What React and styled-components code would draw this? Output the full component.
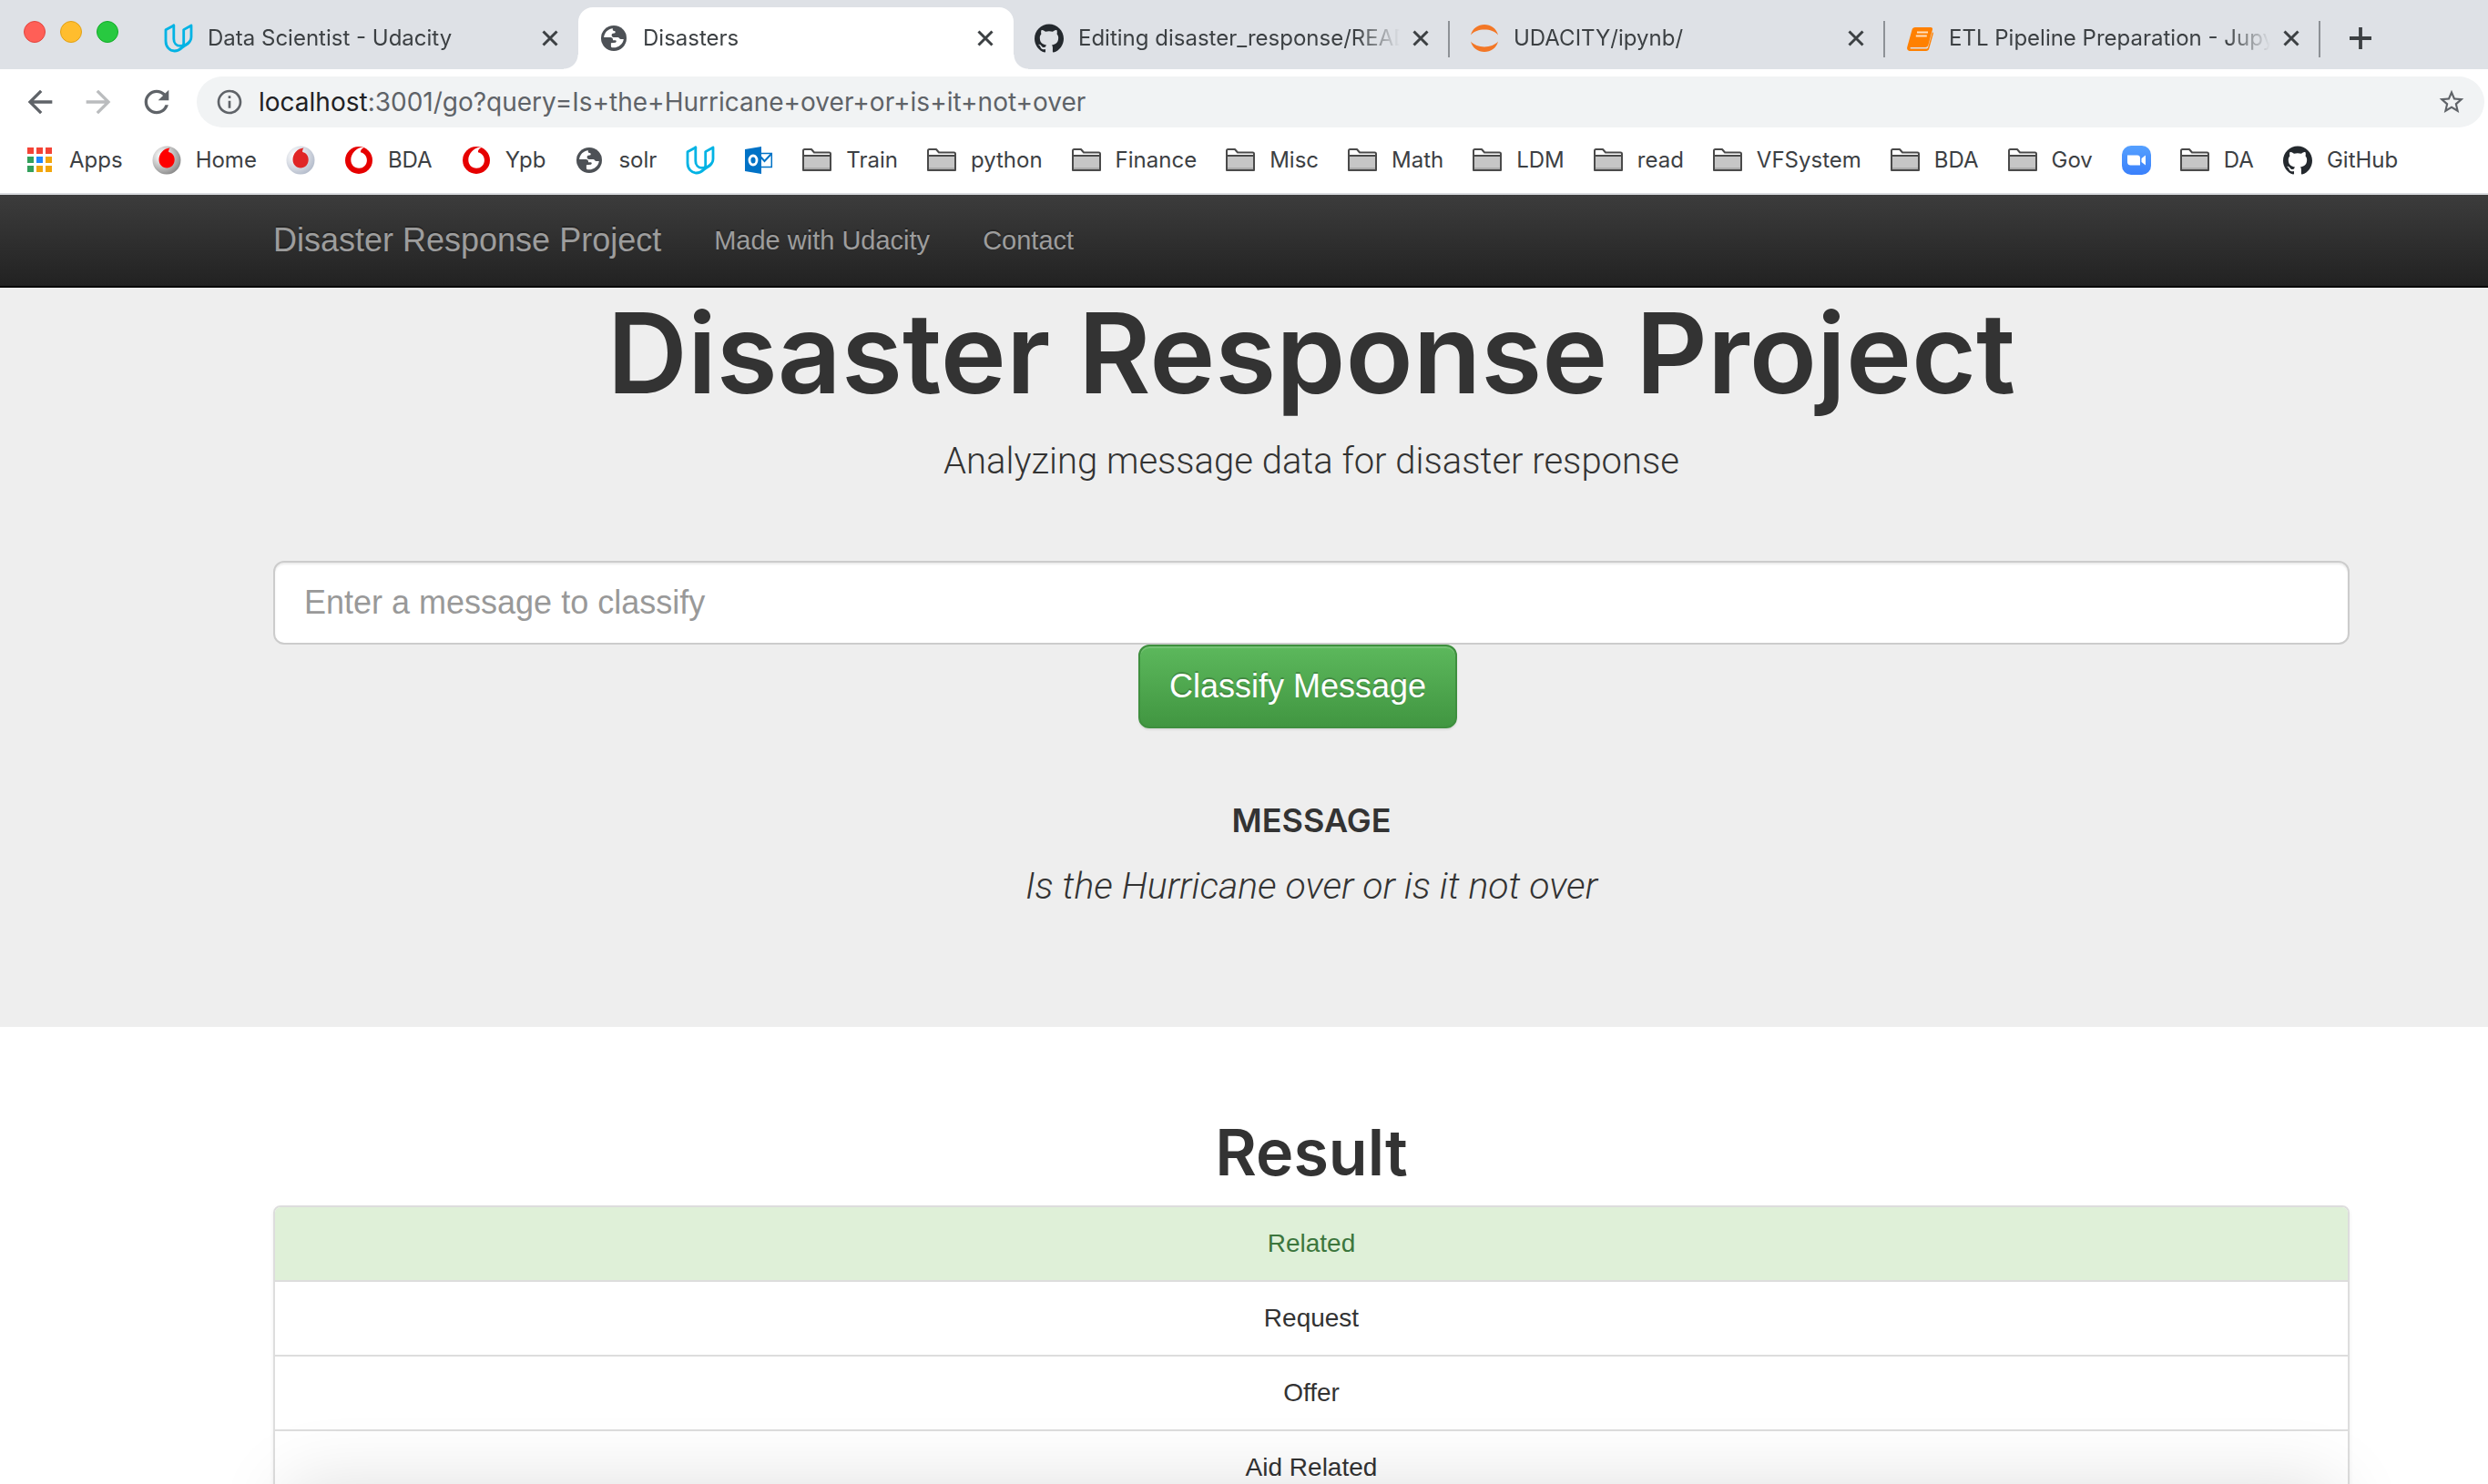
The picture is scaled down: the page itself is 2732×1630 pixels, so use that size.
import React from "react";
import styled, { createGlobalStyle, css } from "styled-components";
import { MdArrowBack, MdArrowForward, MdRefresh, MdInfoOutline, MdStarBorder } from "react-icons/md";

const GlobalStyle = createGlobalStyle`
  *, *::before, *::after { box-sizing: border-box; }
  body { margin: 0; background: #fff; }
  button, input { font: inherit; }
  a { color: inherit; text-decoration: none; }
`;

const chromeFont = `Inter, Roboto, sans-serif`;
const pageFont = `"Helvetica Neue", "Liberation Sans", Arial, sans-serif`;
const headingFont = `Inter, "Liberation Sans", sans-serif`;
const lightFont = `Roboto, "Liberation Sans", sans-serif`;

/* ---------- browser window ---------- */

const Window = styled.div`
  display: flex;
  flex-direction: column;
  height: 100vh;
  overflow: hidden;
`;

const Chrome = styled.header`
  flex: none;
  font-family: ${chromeFont};
  font-size: 24px;
  line-height: 32px;
  color: #3c4043;
  background: #fff;
  border-bottom: 2px solid #dadce0;
`;

const TabStrip = styled.div`
  display: flex;
  height: 76px;
  padding-top: 8px;
  background: #dee1e6;
`;

const WindowControls = styled.div`
  flex: none;
  display: flex;
  gap: 16px;
  width: 157px;
  padding: 15px 0 0 26px;
`;

const ControlDot = styled.button`
  width: 24px;
  height: 24px;
  padding: 0;
  border: 1px solid ${(p) => p.$edge};
  border-radius: 50%;
  background: ${(p) => p.$fill};
`;

const flare = css`
  content: "";
  position: absolute;
  bottom: 0;
  width: 16px;
  height: 16px;
`;

const Tab = styled.div`
  position: relative;
  flex: 0 1 478px;
  min-width: 0;
  display: flex;
  align-items: center;
  padding: 0 20px 0 23px;
  ${(p) =>
    p.$active &&
    css`
      background: #fff;
      border-radius: 16px 16px 0 0;
      &::before {
        ${flare}
        left: -16px;
        background: radial-gradient(circle at 0 0, transparent 15px, #fff 16px);
      }
      &::after {
        ${flare}
        right: -16px;
        background: radial-gradient(circle at 100% 0, transparent 15px, #fff 16px);
      }
    `}
  ${(p) =>
    p.$divided &&
    css`
      &::after {
        content: "";
        position: absolute;
        right: -1px;
        top: 15px;
        width: 2px;
        height: 40px;
        background: #8d9196;
      }
    `}
`;

const TabTitle = styled.a`
  flex: 1;
  min-width: 0;
  margin: 0 12px 0 16px;
  overflow: hidden;
  white-space: nowrap;
  mask-image: linear-gradient(to right, #000 calc(100% - 48px), transparent);
`;

const IconButton = styled.button`
  flex: none;
  display: flex;
  align-items: center;
  justify-content: center;
  padding: 0;
  border: 0;
  background: none;
  color: ${(p) => p.$color || "#5f6368"};
`;

const NewTab = styled(IconButton)`
  width: 90px;
`;

const Toolbar = styled.div`
  display: flex;
  align-items: center;
  gap: 24px;
  padding: 8px 4px 8px 24px;
`;

const AddressBar = styled.div`
  flex: 1;
  display: flex;
  align-items: center;
  gap: 16px;
  height: 56px;
  padding: 0 20px;
  border-radius: 28px;
  background: #f1f3f4;
  color: #5f6368;
  font-size: 28px;
`;

const Url = styled.div`
  flex: 1;
`;

const Host = styled.span`
  color: #202124;
`;

const Bookmarks = styled.nav`
  display: flex;
  align-items: center;
  gap: 32px;
  height: 64px;
  padding: 0 28px 8px;
`;

const Bookmark = styled.a`
  flex: none;
  display: flex;
  align-items: center;
  gap: 16px;
  white-space: nowrap;
`;

/* ---------- web page ---------- */

const Page = styled.div`
  position: relative;
  flex: 1;
  min-height: 0;
  overflow: hidden;
  font-family: ${pageFont};
  font-size: 28px;
  line-height: 40px;
  color: #333;
  &::after {
    content: "";
    position: absolute;
    left: 316px;
    right: 168px;
    bottom: -200px;
    height: 200px;
    box-shadow: 0 0 80px rgba(0, 0, 0, 0.13);
    pointer-events: none;
  }
`;

const Container = styled.div`
  margin: 0 152px 0 300px;
`;

const NavBar = styled.nav`
  border-bottom: 2px solid #080808;
  background: linear-gradient(#3c3c3c, #222);
  color: #9d9d9d;
  text-shadow: 0 -2px 0 rgba(0, 0, 0, 0.25);
`;

const NavRow = styled(Container)`
  display: flex;
  align-items: center;
  gap: 58px;
  height: 100px;
`;

const Brand = styled.a`
  font-size: 36px;
`;

const NavLink = styled.a`
  font-size: 29px;
`;

const Jumbotron = styled.header`
  padding-bottom: 124px;
  background: #eee;
  text-align: center;
`;

const Title = styled.h1`
  margin: 0 0 16px;
  font-family: ${headingFont};
  font-size: 122px;
  font-weight: 600;
  line-height: 144px;
`;

const Lead = styled.p`
  margin: 0;
  font-family: ${lightFont};
  font-size: 40px;
  font-weight: 300;
  line-height: 62px;
`;

const MessageText = styled(Lead)`
  font-size: 41px;
  font-style: italic;
`;

const Form = styled.form`
  display: flex;
  flex-direction: column;
  align-items: center;
  margin: 78px 0 80px;
  font-size: 36px;
`;

const MessageInput = styled.input`
  width: 100%;
  height: 92px;
  padding: 0 32px;
  border: 2px solid #ccc;
  border-radius: 12px;
  background: #fff;
  box-shadow: inset 0 2px 2px rgba(0, 0, 0, 0.075);
  &::placeholder {
    color: #999;
    opacity: 1;
  }
`;

const SubmitButton = styled.button`
  height: 92px;
  margin-right: 30px;
  padding: 0 32px;
  border: 2px solid #3e8f3e;
  border-radius: 12px;
  background: linear-gradient(#5cb85c, #419641);
  color: #fff;
  text-shadow: 0 -2px 0 rgba(0, 0, 0, 0.2);
  box-shadow: inset 0 2px 0 rgba(255, 255, 255, 0.15), 0 2px 2px rgba(0, 0, 0, 0.075);
`;

const MessageLabel = styled.h4`
  margin: 0 0 20px;
  font-family: ${headingFont};
  font-size: 36px;
  font-weight: 600;
  line-height: 42px;
`;

const Results = styled(Container)`
  padding-top: 98px;
  text-align: center;
`;

const ResultsTitle = styled.h2`
  margin: 0 0 18px;
  font-family: ${headingFont};
  font-size: 70px;
  font-weight: 600;
  line-height: 80px;
`;

const ResultList = styled.ul`
  margin: 0;
  padding: 0;
  list-style: none;
  border: 2px solid #ddd;
  border-radius: 8px;
  overflow: hidden;
  box-shadow: 0 2px 4px rgba(0, 0, 0, 0.075);
`;

const ResultItem = styled.li`
  padding: 20px 30px;
  background: ${(p) => (p.$matched ? "#dff0d8" : "#fff")};
  color: ${(p) => (p.$matched ? "#3c763d" : "#333")};
  & + & {
    border-top: 2px solid #ddd;
  }
`;

/* ---------- drawings ---------- */

const Svg = styled.svg`
  flex: none;
  display: block;
`;

const Icon = ({ box = 32, size = 32, children }) => (
  <Svg width={size} height={size} viewBox={`0 0 ${box} ${box}`} fill="none" aria-hidden="true">
    {children}
  </Svg>
);

const Udacity = () => (
  <Icon>
    <g stroke="#02b3e4" strokeWidth="2.8" strokeLinejoin="round" strokeLinecap="round">
      <path d="M10.8 2 2 6.8V19c0 6.500 4.300 11 9.600 11 3.400 0 6-1.600 8.200-3.600l6-4.400c2.800-2 4.200-4.500 4.200-7.500V2l-8.300 4.600v14.900c0 2.200-.6 3.800-1.900 4.900" />
      <path d="M10.800 2v14.700c0 4.600 3 7.700 7.200 7.700 5 0 8-1.400 10-4.400" />
    </g>
  </Icon>
);

const Globe = () => (
  <Icon>
    <circle cx="16" cy="16" r="14" fill="#4d5156" />
    <path
      fill="#fff"
      d="M15 5.200C9.600 5.600 5.600 9.800 5.100 15h7.200c1.700 0 2.700 1 2.700 2.600v.7h2.500c1.600 0 1.700 2 .4 2.400l-5 .5v3c0 1 .3 1.700 1.200 2C20.600 27.200 26 22.700 26.800 17H23.500c-.8 0-1.200-.5-1.600-1.200-.4-.7-1-.9-1.800-.9h-4.300c-1.300 0-2.200-.9-2.200-2.100 0-1.300 1-2.200 2.500-2.200 1.100 0 1.600-.5 1.600-1.300 0-.9-.6-1.400-1.500-1.400-.9 0-1.400-.8-1.400-1.700 0-.4.100-.700.200-1z"
    />
  </Icon>
);

const GitHub = () => (
  <Icon box={24}>
    <path
      fill="#24292e"
      d="M12 .297c-6.630 0-12 5.373-12 12 0 5.303 3.438 9.800 8.205 11.385.6.113.82-.258.82-.577 0-.285-.01-1.040-.015-2.040-3.338.724-4.042-1.610-4.042-1.610C4.422 18.070 3.633 17.700 3.633 17.700c-1.087-.744.084-.729.084-.729 1.205.084 1.838 1.236 1.838 1.236 1.070 1.835 2.809 1.305 3.495.998.108-.776.417-1.305.76-1.605-2.665-.3-5.466-1.332-5.466-5.930 0-1.310.465-2.380 1.235-3.220-.135-.303-.54-1.523.105-3.176 0 0 1.005-.322 3.300 1.230.96-.267 1.980-.399 3-.405 1.020.006 2.040.138 3 .405 2.280-1.552 3.285-1.230 3.285-1.230.645 1.653.24 2.873.12 3.176.765.84 1.230 1.910 1.230 3.220 0 4.610-2.805 5.625-5.475 5.920.42.36.81 1.096.81 2.220 0 1.606-.015 2.896-.015 3.286 0 .315.21.69.825.57C20.565 22.092 24 17.592 24 12.297c0-6.627-5.373-12-12-12"
    />
  </Icon>
);

const Jupyter = () => (
  <Icon>
    <g fill="#f37726">
      <path d="M1 12.500C3 5 9 1 16 1s13 4 15 11.500C27.500 8.500 22 6.600 16 6.600S4.500 8.500 1 12.500z" />
      <path d="M1 19.500C3 27 9 31 16 31s13-4 15-11.500c-3.500 4-9 5.900-15 5.900S4.500 23.500 1 19.500z" />
    </g>
  </Icon>
);

const Notebook = () => (
  <Icon>
    <path fill="#ff8000" d="M11 4h17c1.600 0 2.400 1 2 2.500l-4.600 17c-.4 1.500-1.600 2.500-3.200 2.500H6.500c-1.200 0-1.500 1.500-.3 1.500h17c1 0 1.600-.4 1.900-1.300L30 9l1 1.500-4.700 16.800C25.900 29 24.800 30 23 30H6c-3 0-4.500-2-3.700-4.500L7.500 6.800C8 5 9.300 4 11 4z" />
    <path stroke="#ffe0bf" strokeWidth="1.800" d="M13 9.500h12M11.800 13.500h12" />
  </Icon>
);

const Apps = () => (
  <Icon>
    {["#f44336", "#f44336", "#f44336", "#34a05c", "#1e88ff", "#f2a60c", "#34a05c", "#f2a60c", "#f2a60c"].map((fill, i) => (
      <rect key={i} x={2 + (i % 3) * 10} y={2 + Math.floor(i / 3) * 10} width="7" height="7" fill={fill} />
    ))}
  </Icon>
);

const drop = "M19.500 2.500c-1 1.300-1.500 2.800-1.300 4.400 4.200.8 6.500 4.200 6.500 8.600 0 5-3.700 9-8.500 9-5 0-8.700-4-8.700-9.200C7.500 9 12.500 3 19.500 2.500z";

const Sphere = ({ id, rim, red }) => (
  <Icon>
    <defs>
      <radialGradient id={id} cx="0.35" cy="0.35" r="0.7">
        <stop offset="0.1" stopColor="#fff" />
        <stop offset="1" stopColor={rim} />
      </radialGradient>
    </defs>
    <circle cx="16" cy="16" r="15.500" fill={`url(#${id})`} />
    <path fill={red} d={drop} />
  </Icon>
);

const Vodafone = () => (
  <Icon>
    <circle cx="16" cy="16" r="15" fill="#e60000" />
    <path fill="#fff" d="M21.800 2.300c-2.300.5-3.900 2.300-3.900 4.900 4.600 1.100 7 4.500 7 8.800 0 5-3.700 8.800-8.600 8.800-5.300 0-9-4-9-9.300C7.300 9 13 2.300 19.800 1.700c.8 0 1.500.2 2 .6z" />
  </Icon>
);

const Outlook = () => (
  <Icon>
    <path fill="#fff" stroke="#0072c6" strokeWidth="1.500" d="M17 8.500h13.300v15H17z" />
    <path stroke="#0072c6" strokeWidth="2" d="m18 12 4.500 5L30 9" />
    <path fill="#0072c6" d="m1 4 18-3v30L1 28z" />
    <ellipse cx="10" cy="16" rx="4" ry="5" stroke="#fff" strokeWidth="2.800" />
  </Icon>
);

const Folder = () => (
  <Icon>
    <path fill="#fff" stroke="#4a4a4a" strokeWidth="2" strokeLinejoin="round" d="M1 27V5.500C1 4.500 1.500 4 2.500 4H10l3 3.500h16.500c1 0 1.500.5 1.500 1.500v18z" />
    <path fill="#c6c6c6" d="M2 12h28v14H2z" />
    <path fill="#ababab" d="M2 24h28v2H2z" />
    <path stroke="#4a4a4a" strokeWidth="2" d="M1 11h30" />
  </Icon>
);

const Zoom = () => (
  <Icon>
    <defs>
      <linearGradient id="zoom-fill" x1="0" y1="0" x2="0" y2="1">
        <stop stopColor="#55a0ff" />
        <stop offset="1" stopColor="#3a80fb" />
      </linearGradient>
    </defs>
    <rect width="32" height="32" rx="10" fill="url(#zoom-fill)" />
    <path fill="#fff" d="M6 10.500h11c1.900 0 3 1.200 3 3v8H9.500c-2 0-3.500-1.300-3.500-3.300zM21.500 14l4.500-3.500v11L21.500 18z" />
  </Icon>
);

const Close = () => (
  <Icon box={22} size={22}>
    <path stroke="currentColor" strokeWidth="3" d="m3.500 3.500 15 15M18.500 3.500l-15 15" />
  </Icon>
);

const Plus = () => (
  <Icon box={24} size={24}>
    <path stroke="currentColor" strokeWidth="3.800" d="M12 0v24M0 12h24" />
  </Icon>
);

/* ---------- content ---------- */

const controls = [
  { name: "Close", fill: "#ff5f57", edge: "#e2463f" },
  { name: "Minimise", fill: "#ffbd2e", edge: "#e1a116" },
  { name: "Full screen", fill: "#28c940", edge: "#12ac28" },
];

const tabs = [
  { title: "Data Scientist - Udacity", icon: <Udacity /> },
  { title: "Disasters", icon: <Globe />, active: true },
  { title: "Editing disaster_response/READ", icon: <GitHub />, divided: true },
  { title: "UDACITY/ipynb/", icon: <Jupyter />, divided: true },
  { title: "ETL Pipeline Preparation - Jupy", icon: <Notebook />, divided: true },
];

const bookmarks = [
  { label: "Apps", icon: <Apps /> },
  { label: "Home", icon: <Sphere id="sphere-dark" rim="#8a8a8a" red="#fe0000" /> },
  { name: "Vodafone", icon: <Sphere id="sphere-light" rim="#b4bccb" red="#e02626" /> },
  { label: "BDA", icon: <Vodafone /> },
  { label: "Ypb", icon: <Vodafone /> },
  { label: "solr", icon: <Globe /> },
  { name: "Udacity", icon: <Udacity /> },
  { name: "Outlook", icon: <Outlook /> },
  { label: "Train", icon: <Folder /> },
  { label: "python", icon: <Folder /> },
  { label: "Finance", icon: <Folder /> },
  { label: "Misc", icon: <Folder /> },
  { label: "Math", icon: <Folder /> },
  { label: "LDM", icon: <Folder /> },
  { label: "read", icon: <Folder /> },
  { label: "VFSystem", icon: <Folder /> },
  { label: "BDA", icon: <Folder /> },
  { label: "Gov", icon: <Folder /> },
  { name: "Zoom", icon: <Zoom /> },
  { label: "DA", icon: <Folder /> },
  { label: "GitHub", icon: <GitHub /> },
];

const results = [
  { label: "Related", matched: true },
  { label: "Request" },
  { label: "Offer" },
  { label: "Aid Related" },
];

export default function App() {
  return (
    <Window>
      <GlobalStyle />
      <Chrome>
        <TabStrip>
          <WindowControls>
            {controls.map((c) => (
              <ControlDot key={c.name} type="button" aria-label={c.name} $fill={c.fill} $edge={c.edge} />
            ))}
          </WindowControls>
          {tabs.map((tab) => (
            <Tab key={tab.title} $active={tab.active} $divided={tab.divided}>
              {tab.icon}
              <TabTitle href="#">{tab.title}</TabTitle>
              <IconButton type="button" aria-label="Close tab" $color="#3c4043">
                <Close />
              </IconButton>
            </Tab>
          ))}
          <NewTab type="button" aria-label="New tab" $color="#3c4043">
            <Plus />
          </NewTab>
        </TabStrip>
        <Toolbar>
          <IconButton type="button" aria-label="Back">
            <MdArrowBack size={40} />
          </IconButton>
          <IconButton type="button" aria-label="Forward" $color="#babcbe">
            <MdArrowForward size={40} />
          </IconButton>
          <IconButton type="button" aria-label="Reload">
            <MdRefresh size={40} />
          </IconButton>
          <AddressBar>
            <MdInfoOutline size={32} />
            <Url>
              <Host>localhost</Host>:3001/go?query=Is+the+Hurricane+over+or+is+it+not+over
            </Url>
            <IconButton type="button" aria-label="Bookmark this page">
              <MdStarBorder size={32} />
            </IconButton>
          </AddressBar>
        </Toolbar>
        <Bookmarks>
          {bookmarks.map((b, i) => (
            <Bookmark key={i} href="#" aria-label={b.name}>
              {b.icon}
              {b.label}
            </Bookmark>
          ))}
        </Bookmarks>
      </Chrome>
      <Page>
        <NavBar>
          <NavRow>
            <Brand href="#">Disaster Response Project</Brand>
            <NavLink href="#">Made with Udacity</NavLink>
            <NavLink href="#">Contact</NavLink>
          </NavRow>
        </NavBar>
        <Jumbotron>
          <Container>
            <Title>Disaster Response Project</Title>
            <Lead>Analyzing message data for disaster response</Lead>
            <Form onSubmit={(e) => e.preventDefault()}>
              <MessageInput type="text" aria-label="Message" placeholder="Enter a message to classify" />
              <SubmitButton type="submit">Classify Message</SubmitButton>
            </Form>
            <MessageLabel>MESSAGE</MessageLabel>
            <MessageText>Is the Hurricane over or is it not over</MessageText>
          </Container>
        </Jumbotron>
        <Results as="main">
          <ResultsTitle>Result</ResultsTitle>
          <ResultList>
            {results.map((r) => (
              <ResultItem key={r.label} $matched={r.matched}>
                {r.label}
              </ResultItem>
            ))}
          </ResultList>
        </Results>
      </Page>
    </Window>
  );
}
